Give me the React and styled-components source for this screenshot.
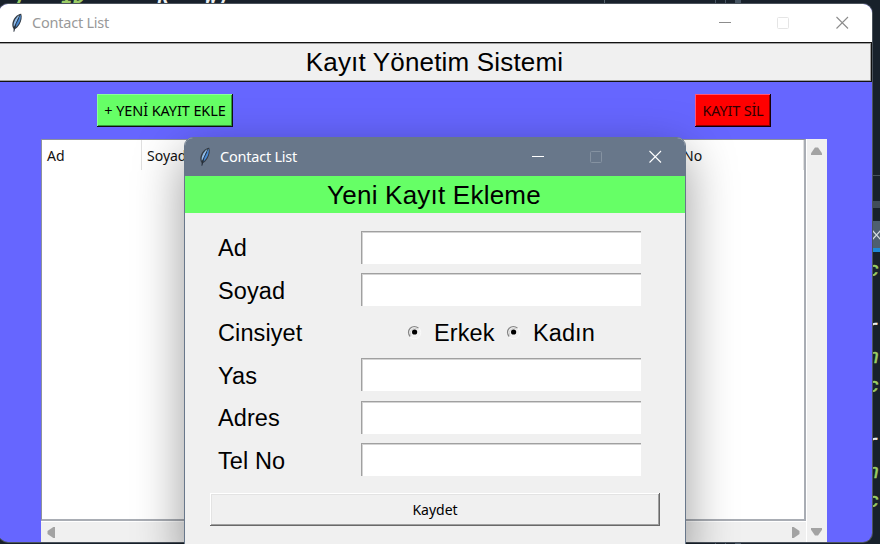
import React from "react";
import styled, { createGlobalStyle, css } from "styled-components";

const Global = createGlobalStyle`
  * { box-sizing: border-box; }
  html, body { margin: 0; overflow: hidden; }
`;

const ui = `"Noto Sans", "Open Sans", sans-serif`;
const arial = `"Liberation Sans", Arial, sans-serif`;

const Desktop = styled.div`
  position: relative;
  width: 880px;
  height: 544px;
  overflow: hidden;
  background: #18212b;
`;

const CodeStrip = styled.div`
  position: absolute;
  left: 13px;
  top: -14px;
  height: 24px;
  font: italic bold 20px/24px "Liberation Mono", monospace;
  white-space: pre;
  color: #eceff1;
`;
const Green = styled.span`
  color: #9ccc65;
`;

const TopPanes = styled.div`
  position: absolute;
  left: 604px;
  top: 0;
  width: 140px;
  height: 544px;
  display: flex;
  gap: 9px;
  padding-left: 110px;
  border-left: 1px solid #56626d;
`;
const PaneLine = styled.div`
  width: ${(p) => p.$w || 1}px;
  background: #475563;
`;

const EditorEdge = styled.div`
  position: absolute;
  left: 867px;
  top: 175px;
  width: 13px;
  height: 369px;
  overflow: hidden;
  border-top: 1px solid #47525e;
`;
const EdgeBar = styled.div`
  height: 7px;
  margin: 25px 0 13px;
  background: #414d5a;
`;
const EdgeTab = styled.div`
  height: 31px;
  background: #4e5f70;
  border-bottom: 4px solid #1e88d6;
  display: flex;
  align-items: center;
  padding-left: 5px;
`;
const EdgeCode = styled.div`
  position: relative;
  top: 5px;
  margin-left: ${(p) => p.$shift || 0}px;
  font: italic 20px/28.9px "Liberation Mono", monospace;
  -webkit-text-stroke: 0.5px;
  color: ${(p) => p.$c || "#9ccc65"};
  height: 28.9px;
`;

const Window = styled.section`
  position: absolute;
  display: flex;
  flex-direction: column;
  overflow: hidden;
  ${(p) =>
    p.$dialog
      ? css`
          left: 184px;
          top: 137px;
          width: 502px;
          height: 420px;
          border: 1px solid #68778a;
          border-radius: 9px;
          background: #f0f0f0;
          box-shadow: 0 16px 50px rgba(0, 0, 0, 0.4);
        `
      : css`
          left: -1px;
          top: 4px;
          width: 873px;
          height: 538px;
          border-radius: 9px;
          background: #6666ff;
          box-shadow: 0 0 0 1px #4b535c;
        `}
`;

const TitleBar = styled.header`
  display: flex;
  align-items: center;
  flex: none;
  height: 38px;
  padding: 0 23px 0 ${(p) => (p.$dialog ? 13 : 11)}px;
  background: ${(p) => (p.$dialog ? "#68778a" : "#ffffff")};
  color: ${(p) => (p.$dialog ? "#ffffff" : "#999999")};
`;
const Title = styled.span`
  flex: 1;
  margin-left: 8px;
  padding-bottom: 2px;
  font: 14.5px/20px ${ui};
  letter-spacing: -0.22px;
`;
const Controls = styled.div`
  display: flex;
  gap: 46px;
  padding-bottom: 1px;
`;

const Banner = styled.h1`
  flex: none;
  margin: 0;
  font: 26px/36px ${arial};
  text-align: center;
  color: #000;
  ${(p) =>
    p.$green
      ? css`
          height: 37px;
          line-height: 38px;
          letter-spacing: 0.22px;
          background: #66ff66;
          padding-right: 2px;
        `
      : css`
          height: 40px;
          line-height: 38px;
          letter-spacing: 0.17px;
          background: #f0f0f0;
          border: 1px solid #111;
          border-left: 0;
          box-shadow: inset -1px 0 #a0a0a0, inset 0 1px #a0a0a0, inset 0 -1px #a0a0a0;
          padding-right: 1px;
        `}
`;

const Actions = styled.div`
  display: flex;
  justify-content: space-between;
  flex: none;
  height: 57px;
  padding: 12px 101px 0 98px;
`;
const Button = styled.button`
  height: 33px;
  padding: 0 0 2px;
  font: 14.5px/20px ${ui};
  color: #000;
  border-radius: 0;
  white-space: nowrap;
  border: 0;
  ${(p) =>
    p.$kind === "add" &&
    css`
      width: 136px;
      letter-spacing: -0.1px;
      background: #66ff66;
      box-shadow: inset -1px -1px #111, inset 1px 1px #8aff9b, inset -2px -2px #339c3a;
    `}
  ${(p) =>
    p.$kind === "delete" &&
    css`
      width: 76px;
      letter-spacing: -0.2px;
      color: #300000;
      background: #ff0000;
      box-shadow: inset -1px -1px #16000a, inset 1px 1px #ff5577, inset -2px -2px #8f0000;
    `}
  ${(p) =>
    p.$kind === "save" &&
    css`
      height: 33px;
      width: 450px;
      margin: 12px 0 0 25px;
      padding: 0;
      font-size: 14px;
      background: #f0f0f0;
      box-shadow: inset -1px -1px #696969, inset 1px 1px #fff, inset -2px -2px #a0a0a0, inset 2px 2px #e3e3e3;
    `}
`;

const TableArea = styled.div`
  display: grid;
  grid-template-columns: 765px 21px;
  grid-template-rows: 382px 21px;
  width: 786px;
  margin-left: 42px;
  background: #f0f0f0;
`;
const Table = styled.div`
  background: #fff;
  border: 1px solid #828790;
  border-color: #8e929b #a9adb4 #a9adb4 #8e929b;
  border-right-width: 2px;
  border-bottom-width: 2px;
`;
const Columns = styled.div`
  display: grid;
  grid-template-columns: 100px 536px 1fr;
  height: 30px;
`;
const Column = styled.div`
  border-right: 1px solid #e0e0e0;
  padding: 6px 0 0 5px;
  font: 14px/20px ${ui};
  letter-spacing: 0;
  white-space: nowrap;
  color: #111;
`;
const VBar = styled.div`
  display: flex;
  flex-direction: column;
  justify-content: space-between;
  align-items: center;
  grid-row: 1 / 3;
  grid-column: 2;
  border-left: 1px solid #fff;
  padding: 8px 2px 6px 0;
`;
const HBar = styled.div`
  display: flex;
  justify-content: space-between;
  align-items: center;
  border-top: 1px solid #fff;
  padding: 0 6px;
`;

const Form = styled.div`
  display: grid;
  grid-template-columns: 143px 281px;
  grid-template-rows: repeat(6, 42.5px);
  margin: 13px 0 0 33px;
  align-items: center;
  font: 23.5px/30px ${arial};
  color: #000;
`;
const Label = styled.label`
  padding-top: 2px;
  letter-spacing: 0.1px;
`;
const Field = styled.input`
  width: 280px;
  height: 33px;
  border: 0;
  outline: 0;
  background: #fff;
  border-top: 1px solid #a0a0a0;
  border-left: 1px solid #a0a0a0;
  box-shadow: inset 1px 1px #d4d4d4;
`;
const Choices = styled.div`
  display: flex;
  align-items: center;
  padding-left: 46px;
`;
const Choice = styled.span`
  display: flex;
  align-items: center;
  gap: 12px;
  width: 99px;
  white-space: nowrap;
`;
const ChoiceText = styled.span`
  padding-top: 2px;
  letter-spacing: 0.1px;
`;

const Feather = () => (
  <svg width="14" height="20" viewBox="0 0 14 20">
    <path d="M3.8 18.8 L3.5 15.8 C1.4 12.5 2.3 8 5 4.5 C7.2 1.8 9.7.6 11.2.7 C12.3 3.5 11.6 8.1 9.5 11.4 C8.1 13.6 6.4 15.4 4.7 16 Z" fill="#333a42" />
    <path d="M3.9 13.8 C2.8 10.5 5 5.5 9.4 2.1 L5.9 10.2 Z" fill="#91bce8" />
    <path d="M10.6 1.8 C11.4 5.1 10 10.7 5.2 14.8 L6 10.6 Z" fill="#4a8ad2" />
    <path d="M8.8 5 Q5.8 9.5 3.9 18.8" fill="none" stroke="#182331" strokeWidth=".7" />
  </svg>
);

const WindowControls = ({ dialog }) => {
  const main = dialog ? "#fff" : "#8c8c8c";
  const dim = dialog ? "#8592a1" : "#e5e5e5";
  return (
    <Controls>
      <svg width="13" height="13"><path d="M1 6.5H13" stroke={main} /></svg>
      <svg width="13" height="13"><rect x=".5" y="1.5" width="11" height="11" rx="1" fill="none" stroke={dim} /></svg>
      <svg width="13" height="13"><path d="M.5 1L12 12.5M12 1L.5 12.5" stroke={main} strokeWidth="1.1" /></svg>
    </Controls>
  );
};

const arrows = {
  up: ["11", "9", "M4 0.5H7L11 6.3V8H0V6.3Z"],
  down: ["11", "9", "M0 1H11V2.7L7 8.5H4L0 2.7Z"],
  left: ["9", "11", "M8 0V11H6.3L.5 7V4L6.3 0Z"],
  right: ["9", "11", "M1 0V11H2.7L8.5 7V4L2.7 0Z"],
};
const Arrow = ({ dir }) => {
  const [w, h, d] = arrows[dir];
  return <svg width={w} height={h}><path d={d} fill="#a3a3a3" /></svg>;
};

const Radio = () => (
  <svg width="15" height="15" viewBox="0 0 15 15">
    <circle cx="7.5" cy="7.5" r="6.3" fill="#f1f1f1" stroke="#fafafa" />
    <path d="M3.2 11.5A5.8 5.8 0 0 1 11.5 3.2" fill="none" stroke="#858585" strokeWidth="1.2" />
    <path d="M4 10.6A4.8 4.8 0 0 1 10.6 4" fill="none" stroke="#d0d0d0" strokeWidth="1" />
    <circle cx="7.6" cy="7" r="2.6" fill="#000" />
  </svg>
);

const FieldRow = ({ name }) => (
  <>
    <Label>{name}</Label>
    <Field aria-label={name} />
  </>
);

export default function App() {
  return (
    <Desktop>
      <Global />
      <CodeStrip><Green>)   ID"</Green>     k   W)</CodeStrip>
      <TopPanes>
        <PaneLine />
        <PaneLine />
        <PaneLine $w={6} />
      </TopPanes>
      <EditorEdge>
        <EdgeBar />
        <EdgeTab>
          <svg width="8" height="10"><path d="M0 0L9 10M9 0L0 10" stroke="#d5dbe0" strokeWidth="1.3" /></svg>
        </EdgeTab>
        <EdgeCode>c</EdgeCode>
        <EdgeCode />
        <EdgeCode $c="#eceff1" $shift={-1}>r</EdgeCode>
        <EdgeCode>n</EdgeCode>
        <EdgeCode>c</EdgeCode>
        <EdgeCode />
        <EdgeCode $c="#eceff1" $shift={-1}>r</EdgeCode>
        <EdgeCode>n</EdgeCode>
        <EdgeCode>c</EdgeCode>
      </EditorEdge>

      <Window>
        <TitleBar>
          <Feather />
          <Title>Contact List</Title>
          <WindowControls />
        </TitleBar>
        <Banner>Kayıt Yönetim Sistemi</Banner>
        <Actions>
          <Button $kind="add">+ YENİ KAYIT EKLE</Button>
          <Button $kind="delete">KAYIT SİL</Button>
        </Actions>
        <TableArea>
          <Table>
            <Columns>
              <Column>Ad</Column>
              <Column>Soyad</Column>
              <Column>No</Column>
            </Columns>
          </Table>
          <VBar><Arrow dir="up" /><Arrow dir="down" /></VBar>
          <HBar><Arrow dir="left" /><Arrow dir="right" /></HBar>
        </TableArea>
      </Window>

      <Window $dialog>
        <TitleBar $dialog>
          <Feather />
          <Title>Contact List</Title>
          <WindowControls dialog />
        </TitleBar>
        <Banner $green>Yeni Kayıt Ekleme</Banner>
        <Form>
          <FieldRow name="Ad" />
          <FieldRow name="Soyad" />
          <Label>Cinsiyet</Label>
          <Choices>
            <Choice><Radio /><ChoiceText>Erkek</ChoiceText></Choice>
            <Choice><Radio /><ChoiceText>Kadın</ChoiceText></Choice>
          </Choices>
          <FieldRow name="Yas" />
          <FieldRow name="Adres" />
          <FieldRow name="Tel No" />
        </Form>
        <Button $kind="save">Kaydet</Button>
      </Window>
    </Desktop>
  );
}
